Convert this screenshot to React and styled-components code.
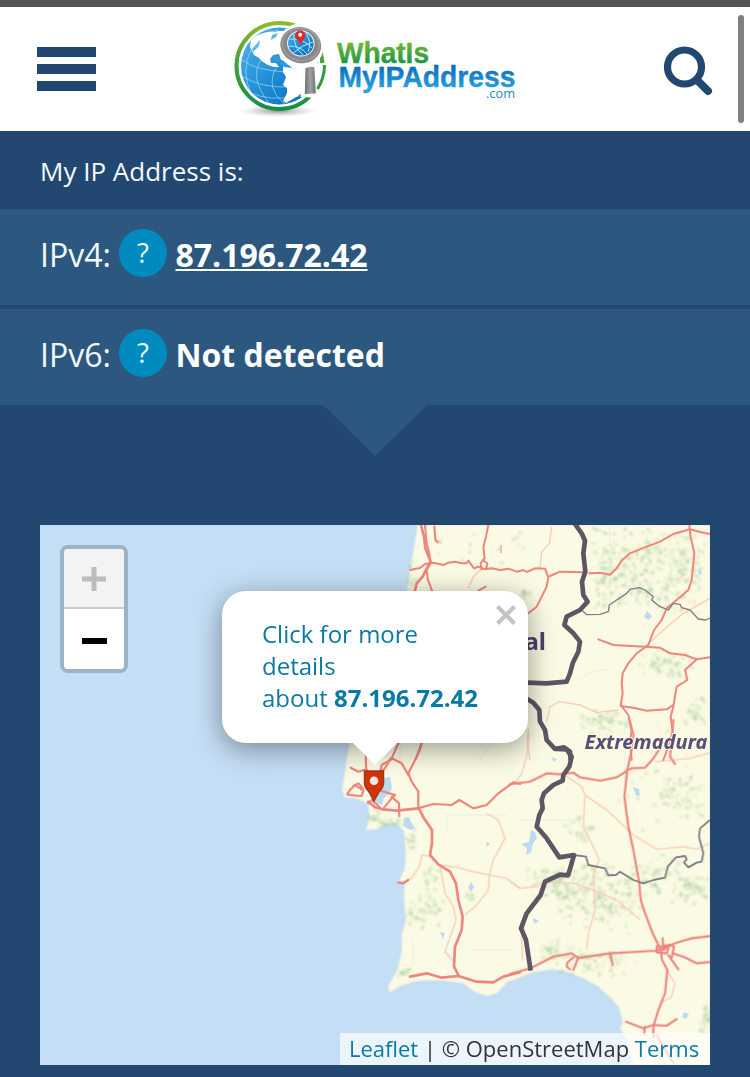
import React from "react";
import styled, { createGlobalStyle } from "styled-components";

const Global = createGlobalStyle`
  * { box-sizing: border-box; }
  body { margin: 0; background: #224871; font-family: "Open Sans", "Noto Sans", sans-serif; overflow: hidden; }
`;

const Page = styled.div`
  width: 750px;
  height: 1077px;
  overflow: hidden;
  position: relative;
  background: #224871;
  color: #f2faff;
`;
const TopBar = styled.div`
  height: 7px;
  background: #555454;
`;
const Header = styled.header`
  height: 124px;
  background: #fff;
  display: flex;
  justify-content: space-between;
  align-items: flex-start;
  padding: 0 36px 0 36.5px;
`;
const MenuButton = styled.div`
  display: flex;
  flex-direction: column;
  gap: 7px;
  width: 59px;
  margin-top: 40px;
`;
const MenuBar = styled.span`
  height: 10px;
  background: #224871;
`;
const Logo = styled.svg`
  display: block;
  width: 300px;
  height: 124px;
  margin-right: 11px;
`;
const SearchIcon = styled.svg`
  display: block;
  width: 50px;
  height: 50px;
  margin-top: 39px;
`;
const ScrollThumb = styled.div`
  position: absolute;
  top: 15px;
  right: 6px;
  width: 6px;
  height: 108px;
  border-radius: 3px;
  background: #808080;
`;
const Title = styled.div`
  height: 78px;
  padding: 1px 40px 0;
  display: flex;
  align-items: center;
  font-size: 26px;
`;
const Rows = styled.div`
  display: flex;
  flex-direction: column;
  gap: 4px;
`;
const Row = styled.div`
  height: 96px;
  padding: 0 40px;
  display: flex;
  align-items: center;
  background: #2c587f;
  font-size: 32px;
`;
const Label = styled.span`
  width: 79px;
  padding-bottom: 5px;
  white-space: nowrap;
`;
const Help = styled.span`
  width: 48px;
  height: 48px;
  border-radius: 50%;
  background: #008bc0;
  margin: 0 8.5px 8px 0;
  padding-bottom: 1px;
  display: flex;
  align-items: center;
  justify-content: center;
  font-size: 27.5px;
`;
const Value = styled.span`
  font-weight: 700;
  color: #fff;
  padding-bottom: 5px;
  text-decoration: ${(p) => (p.$link ? "underline" : "none")};
  text-decoration-thickness: 2px;
  text-underline-offset: 2px;
  text-decoration-skip-ink: none;
`;
const Arrow = styled.div`
  width: 104px;
  height: 51px;
  margin: 0 auto 69px;
  background: #2c587f;
  clip-path: polygon(0 0, 100% 0, 50% 100%);
`;
const MapBox = styled.div`
  position: relative;
  width: 670px;
  height: 540px;
  margin: 0 40px;
  overflow: hidden;
  background: #c4def5;
`;
const MapSvg = styled.svg`
  display: block;
  width: 670px;
  height: 540px;
`;
const ZoomControl = styled.div`
  position: absolute;
  left: 20px;
  top: 20px;
  width: 68px;
  height: 128px;
  border: 4px solid #9cb2c7;
  border-radius: 8px;
  background: #fff;
  overflow: hidden;
  display: flex;
  flex-direction: column;
`;
const ZoomButton = styled.div`
  height: 60px;
  display: flex;
  align-items: center;
  justify-content: center;
  padding-top: ${(p) => (p.$disabled ? "2px" : "4px")};
  background: ${(p) => (p.$disabled ? "#f3f3f3" : "#fff")};
  color: ${(p) => (p.$disabled ? "#bcbcbc" : "#000")};
  border-bottom: ${(p) => (p.$disabled ? "2px solid #ccc" : "none")};
`;
const Popup = styled.div`
  position: absolute;
  left: 182px;
  top: 66px;
  width: 306px;
  height: 152px;
  border-radius: 24px;
  background: #fff;
  box-shadow: 0 6px 28px rgba(0, 0, 0, 0.4);
  padding: 27px 40px;
  color: #0a79a4;
  font-size: 24px;
  line-height: 32px;
`;
const Close = styled.svg`
  position: absolute;
  right: 12px;
  top: 14px;
  width: 20px;
  height: 20px;
`;
const Tip = styled.div`
  position: absolute;
  left: 312px;
  top: 217px;
  width: 46px;
  height: 23px;
  background: #fff;
  clip-path: polygon(0 0, 100% 0, 50% 100%);
`;
const Pin = styled.svg`
  position: absolute;
  left: 323px;
  top: 245px;
  width: 22px;
  height: 32px;
`;
const Attribution = styled.div`
  position: absolute;
  right: 0;
  bottom: 0;
  width: 370px;
  height: 32px;
  line-height: 31px;
  padding-left: 9px;
  background: rgba(255, 255, 255, 0.7);
  color: #333;
  font-size: 22px;
  white-space: nowrap;
`;
const Link = styled.span`
  color: #0a79a4;
`;

const toPath = (pts) => "M" + pts.trim().split(/\s+/).join(" L").replace(/LM/g, "M");
const Line = ({ p, ...rest }) => <path d={toPath(p)} {...rest} />;

/* [centre x, centre y, spread x, spread y, count] of each woodland */
const woods = [
  [605, 575, 18, 45, 70], [650, 555, 50, 28, 130], [645, 590, 40, 25, 110], [690, 575, 18, 45, 60],
  [667, 665, 30, 14, 60], [605, 722, 26, 12, 60], [695, 712, 10, 16, 30], [680, 795, 25, 22, 50],
  [580, 832, 14, 14, 28], [560, 885, 32, 20, 110], [600, 895, 45, 35, 170], [655, 875, 30, 22, 60],
  [690, 888, 20, 18, 55], [595, 962, 40, 16, 80], [550, 950, 12, 10, 30], [430, 878, 10, 14, 18],
  [431, 905, 14, 22, 36], [413, 915, 7, 14, 14], [403, 972, 7, 4, 14], [411, 840, 5, 12, 14],
  [388, 823, 14, 4, 22], [374, 816, 6, 6, 12], [412, 580, 5, 25, 24], [524, 593, 10, 6, 14],
  [470, 895, 5, 5, 6], [705, 1020, 7, 18, 28], [655, 780, 45, 60, 28], [480, 550, 60, 22, 14],
];
const specks = (() => {
  let s = 11;
  const rnd = () => (s = (s * 16807) % 2147483647) / 2147483647;
  const out = [];
  woods.forEach(([x, y, w, h, n]) => {
    for (let i = 0; i < n; i++) {
      out.push([
        x + (rnd() + rnd() - 1) * w * 1.1,
        y + (rnd() + rnd() - 1) * h * 1.1,
        0.8 + rnd() * 1.7,
        0.8 + rnd() * 1.4,
        0.18 + rnd() * 0.38,
      ]);
    }
  });
  return out;
})();

const NE = "translate(400 520) scale(.33333)";
const SW = "translate(330 720) scale(.33333)";
const SE = "translate(510 720) scale(.33333)";

function Terrain() {
  return (
    <MapSvg viewBox="40 525 670 540">
      <defs>
        <filter id="soft"><feGaussianBlur stdDeviation="0.5" /></filter>
        <filter id="softer"><feGaussianBlur stdDeviation="0.9" /></filter>
      </defs>
      <path
        d="M418 525 L414 548 L410 570 L407 592 L400 630 L385 680 L360 715 L350 743 L347 757 L345 773 L342 790 L345 797 L356 798 L368 803 L370 817 L366 830 L376 829 L385 824 L397 823 L404 831 L406 853 L405 868 L400 880 L405 884 L404 897 L406 920 L402 935 L402 950 L398 969 L388 987 L390 992 L402 985 L415 981 L440 980 L463 983 L475 992 L487 996 L497 993 L507 982 L520 977 L533 972 L553 969 L568 972 L583 978 L598 986 L610 997 L619 1007 L622 1017 L623 1023 L620 1028 L628 1040 L633 1065 L710 1065 L710 525Z"
        fill="#fbfae4" stroke="#e4efe4" strokeWidth="1.5"
      />
      <g fill="#a3cc96" filter="url(#softer)">
        {specks.map(([x, y, rx, ry, o], i) => (
          <ellipse key={i} cx={x} cy={y} rx={rx} ry={ry} opacity={o} />
        ))}
      </g>
      <g fill="#bcdaf2" filter="url(#soft)">
        <path d="M380 785 L384 778 L390 777 L392 788 L389 794 L384 798 L382 805 L374 803 L379 792Z" />
        <path d="M404 818 l5 -1 2 5 4 6 -5 2 -7 -4Z" />
        <path d="M531 830 l4 2 2 6 -4 5 -2 9 -5 3 1 -7 -6 -4 8 -2Z" />
        <path d="M633 787 l6 2 1 7 -4 -1Z M647 611 l5 5 -3 4 -5 -3Z M698 567 l4 6 -3 2Z M551 757 l6 2 -3 3Z M533 918 l6 3 -5 3Z M684 1012 l5 2 -3 5 -4 -2Z M471 882 l3 5 -3 5 -3 -4Z M486 842 l4 2 -3 3Z M440 932 l5 1 -2 6Z" />
      </g>
      <g stroke="#c9e0f0" fill="none" strokeWidth="0.8" opacity=".5">
        <path d="M580 680 l10 -8 l20 -3 M625 785 v-60 M447 830 v-16 M447 815 h60 M413 940 v25 M610 520 v100 M470 950 h45 M518 820 h60 M400 743 v20 M455 735 l18 -12 M480 760 l15 -22" />
      </g>

      <g fill="none" stroke="#f7cdb3" strokeWidth="1.2" filter="url(#soft)">
        <g transform={NE} strokeWidth="4">
          <Line p="455,20 448,70 425,95 420,145" />
          <Line p="245,148 220,170 205,205" />
          <Line p="103,15 108,55 125,72" />
          <Line p="440,605 450,560 480,545 540,555 590,578 655,570" />
          <Line p="735,380 790,330 850,280 930,235" />
          <Line p="385,625 382,665 390,720" />
        </g>
        <g transform={SW} strokeWidth="4">
          <Line p="470,280 505,300 525,355 490,420 478,465 475,510 440,555 405,585" />
          <Line p="330,435 380,442 430,455 480,465 530,475 570,505" />
          <Line p="210,488 245,475 270,435 275,405 300,408" />
          <Line p="330,435 345,520 370,560 378,600 345,695 372,725" />
        </g>
        <g transform={SE} strokeWidth="4">
          <Line p="58,40 50,110 35,160 15,190" />
          <Line p="165,165 215,200 225,225 220,320 245,370 268,420 250,460 255,570 235,640 230,690" />
          <Line p="225,225 290,270 370,345 440,388 520,380 560,388 600,370" />
          <Line p="0,485 30,505 80,500 105,485 190,490 250,510 320,540 390,600" />
          <Line p="435,125 490,120 540,115 600,98" />
          <Line p="470,750 495,790 485,830 450,850" />
          <Line p="50,580 35,650 38,720" />
        </g>
      </g>

      <g fill="none" stroke="#ef857c" strokeLinejoin="round" strokeLinecap="round" filter="url(#soft)">
        <g transform={NE} strokeWidth="6">
          <Line p="63,15 72,50 76,85 84,105 92,125 80,145 68,170 50,190 44,215" strokeWidth="8" />
          <Line p="75,15 80,70 88,100 92,130 80,150 84,180 97,215" />
          <Line p="103,20 106,60 114,68" />
          <Line p="30,150 60,144 75,132 100,128 130,135 145,128 165,125 185,130 200,130 205,122 222,145 235,140 255,148 275,145 300,150 325,146 350,155 370,150 380,156 405,145 435,146 445,172 440,200 430,220 410,260 385,280" />
          <Line p="265,15 258,50 250,80 254,115 242,130 245,148" />
          <Line p="248,120 262,130 258,148" />
          <Line p="450,168 480,155 550,157" />
          <Line p="568,160 600,158 630,164 650,145 665,122 690,100 740,80 780,65 820,42 870,28 900,36 930,42" />
          <Line p="868,15 872,50 883,100 875,180 865,210 830,240 800,265 785,300 762,330 745,375 710,400 685,430 668,460 665,490 668,520 662,555 685,585 695,630 690,665 695,720" />
          <Line p="595,358 640,375 735,380 780,383 810,400 855,405 890,418 930,412" />
          <Line p="890,418 855,450 862,480 830,500 820,560 812,590 818,635 805,680 790,720" />
          <Line p="662,558 700,563 740,572 800,568 820,555" />
          <Line p="235,212 257,200" />
          <Line p="303,76 303,98" strokeWidth="3" />
          <Line p="65,668 60,690 45,720" />
        </g>
        <g transform={SW} strokeWidth="6.5">
          <Line p="275,70 258,115 235,160 245,185 265,215 265,262" />
          <Line p="205,70 185,115 215,130 235,165" />
          <Line p="182,115 165,145 150,158" />
          <Line p="107,80 108,140 112,155" />
          <Line p="62,143 85,155 108,148" />
          <Line p="185,118 155,135 150,160" />
          <Line p="52,222 60,210 75,195 90,205 100,212 95,228 70,226 52,224" />
          <Line p="70,198 85,190 98,205" />
          <Line p="115,245 135,262 158,268 200,272 265,265" strokeWidth="8" />
          <Line p="158,268 185,235 195,225 155,213" />
          <Line p="185,230 207,250 208,288" />
          <Line p="115,250 125,240 150,262" />
          <Line p="265,265 310,252 365,255 388,240 430,265 470,255 505,220 550,187 570,192" />
          <Line p="265,262 282,295 306,330 306,370 300,405 325,433 360,455 378,490 385,540 398,590 395,630 375,680 372,740 385,765" strokeWidth="8" />
          <Line p="240,770 290,760 335,773 385,768 440,785 490,787 520,770 570,757" strokeWidth="8" />
          <Line p="205,488 220,490 235,480" />
        </g>
        <g transform={SE} strokeWidth="6.5">
          <Line p="0,192 60,185 110,160 150,163 190,158 210,172 270,182 320,172 352,152" />
          <Line p="358,0 370,45 365,90 352,150 343,230 355,320 370,390 388,490 392,540 405,580 428,640 452,688 456,720 472,750 465,820 445,870 430,920 430,950" />
          <Line p="352,150 365,145 405,143 430,115 450,85" />
          <Line p="490,0 486,50 480,110 495,132" />
          <Line p="0,762 60,745 130,710 185,700 205,714 300,700 440,692 500,668 545,655 600,648" />
          <Line p="205,712 190,750" />
          <Line p="180,748 170,740 172,728 190,712" />
          <Line p="300,700 308,735" />
          <Line p="458,655 460,690 480,675 492,680 485,712" />
          <Line p="440,678 440,697 470,700 478,675 445,680" />
          <Line p="490,700 525,712 560,730 600,726" />
          <Line p="475,705 505,748" />
          <Line p="348,905 400,925 430,915 470,917 500,897" />
          <Line p="404,920 403,945" />
          <Line p="440,945 490,1030" />
        </g>
      </g>

      <g fill="none" stroke="#807c86" strokeWidth="4" strokeLinejoin="round">
        <g transform={NE}>
          <Line p="545,270 560,284 600,283 625,275 628,255 650,240 680,220 690,208 718,203 735,210 760,230 755,240 780,260 805,270 820,250 840,253 845,263 870,270 895,297 918,300 930,294" />
        </g>
        <g transform={SE} strokeWidth="5.5">
          <Line p="190,405 228,410 235,435 285,445 295,466 318,465 330,455 370,480 400,490 430,480 465,473 473,440 498,412 525,408 530,418 522,428 535,442 560,428 575,425 580,400 567,350 570,325 600,300" />
        </g>
      </g>
      <g fill="none" stroke="#5f5464" strokeWidth="14" strokeLinejoin="round" filter="url(#soft)">
        <g transform={NE}>
          <Line p="522,8 545,40 555,62 550,100 556,155 546,185 550,225 563,245 540,270 500,290 493,315 520,340 540,365 535,395 518,430 510,460 500,485 440,490 380,488" />
          <Line p="378,535 400,548 418,570 420,605 435,630 440,660 465,687 492,682 510,695 512,720" />
        </g>
        <g transform={SE}>
          <Line p="138,87 170,88 185,110 178,140 160,165 158,182 130,195 102,220 95,240 98,265 88,285 80,320 110,355 148,412 192,405 182,440 174,466 150,464 105,485 92,525 50,580 33,625 48,660 62,752" />
        </g>
      </g>
      <g fontFamily="Noto Sans, sans-serif" fontWeight="700" fill="#4e4168" stroke="#fbfae4" strokeWidth="2" paintOrder="stroke">
        <text x="546" y="649.500" fontSize="24" textAnchor="end">Portugal</text>
        <text x="584.500" y="749" fontSize="19" fontStyle="italic" fill="#5c4c78" textLength="123" lengthAdjust="spacingAndGlyphs">Extremadura</text>
      </g>
    </MapSvg>
  );
}

function BrandLogo() {
  return (
    <Logo viewBox="225 7 300 124">
      <defs>
        <linearGradient id="ring" x1="0" y1="0" x2="0" y2="1">
          <stop offset="0" stopColor="#8abd2c" />
          <stop offset=".5" stopColor="#3f9f3a" />
          <stop offset="1" stopColor="#159044" />
        </linearGradient>
        <linearGradient id="sea" x1="0" y1="0" x2="1" y2="1">
          <stop offset="0" stopColor="#52b6ea" />
          <stop offset=".5" stopColor="#1f8fd6" />
          <stop offset="1" stopColor="#0865b6" />
        </linearGradient>
        <linearGradient id="green" x1="0" y1="0" x2="0" y2="1">
          <stop offset=".1" stopColor="#80bd34" />
          <stop offset=".9" stopColor="#159443" />
        </linearGradient>
        <linearGradient id="blue" x1="0" y1="0" x2="0" y2="1">
          <stop offset=".1" stopColor="#0866b8" />
          <stop offset=".9" stopColor="#29a5e0" />
        </linearGradient>
        <linearGradient id="metal" x1="0" y1="0" x2="1" y2="0">
          <stop offset="0" stopColor="#6c6d6e" />
          <stop offset=".5" stopColor="#a0a1a2" />
          <stop offset="1" stopColor="#707172" />
        </linearGradient>
        <radialGradient id="shade">
          <stop offset="0" stopColor="#777" stopOpacity=".8" />
          <stop offset="1" stopColor="#bbb" stopOpacity="0" />
        </radialGradient>
        <clipPath id="globe"><circle cx="280.500" cy="66" r="38.500" /></clipPath>
      </defs>
      <ellipse cx="279" cy="111" rx="39" ry="6" fill="url(#shade)" />
      <circle cx="280.500" cy="66" r="43" fill="#fff" stroke="url(#ring)" strokeWidth="4" />
      <circle cx="280.500" cy="66" r="38.500" fill="url(#sea)" />
      <g clipPath="url(#globe)">
        <g fill="none" stroke="#a6d8f4" strokeWidth=".7">
          <path d="M243 60 Q256 70 286 72 M242 76 Q262 88 290 87 M250 92 Q270 102 300 96 M253 48 Q240 70 254 98 M262 60 Q250 78 270 103 M277 68 Q266 88 286 104" />
        </g>
        <path fill="#fff" d="M251 47 L252 39 Q262 32 275 31 L284 31 L300 26 L325 40 L318 68 L300 69 L292 66 L288 61 L282 60 L280 54 L274 55 L271 59 L272 63 L277 63 L280 67 L275 67 L269 65 L264 62 L260 58 L255 55Z" />
        <path fill="#fff" d="M284 66 L290 64 L322 66 L320 96 L304 92 L299 96 L292 100 L287 103 L284 101 L288 93 L288 88 L284 85 L287 77 L284 72Z" />
        <path fill="#5db8e8" d="M273 35 l6 -2 -2 4 -5 3Z M269 31 l12 -2 -4 3Z M253 49 l8 -9 -1 6 -6 6Z" />
        <path fill="#2f9bdd" d="M274 57 l5 -2 3 6 7 2 4 5 -8 -1 -5 -5 -5 0Z" />
      </g>
      <path d="M302 66 L318 64 L329 62 L321 98 L301.500 97Z" fill="#fff" />
      <path d="M325.500 65 Q325.500 78 318.500 89" fill="none" stroke="#36993e" strokeWidth="3" />
      <path d="M306.500 66 Q311 67 315.300 67.200 L316.800 93.500 L305.800 94Z" fill="url(#metal)" />
      <circle cx="301.800" cy="46" r="22.800" fill="#fff" />
      <g transform="rotate(12 301.800 45)">
        <ellipse cx="301.800" cy="45.200" rx="20.500" ry="18" fill="#8a898a" />
        <ellipse cx="301.800" cy="44.500" rx="18.500" ry="16" fill="none" stroke="#a6a5a5" strokeWidth="1" />
        <ellipse cx="301.500" cy="43.500" rx="13.300" ry="12.500" fill="url(#sea)" stroke="#eef7fc" strokeWidth="1" />
      </g>
      <path d="M291 39 Q304 38 313 48 M290 46 Q302 46 308 54 M294 53 Q303 45 314 42 M295 34 Q294 46 304 55 M307 33 Q313 42 309 52" fill="none" stroke="#b6e2f7" strokeWidth="1" />
      <path d="M301.500 45 C299.500 40 296 39 296 35.500 A5.200 5 0 0 1 306.400 35.500 C306.400 39 303.500 40 301.500 45Z" fill="#dd2b29" />
      <circle cx="301.200" cy="34.800" r="2" fill="#fff" />
      <g fontFamily="Liberation Sans, sans-serif" fontWeight="700" strokeLinejoin="round" strokeWidth=".4">
        <text x="338" y="62.500" fontSize="29.500" textLength="92" lengthAdjust="spacingAndGlyphs" fill="url(#green)" stroke="url(#green)">WhatIs</text>
        <text x="339.500" y="87" fontSize="29.500" textLength="177" lengthAdjust="spacingAndGlyphs" fill="url(#blue)" stroke="url(#blue)">MyIPAddress</text>
      </g>
      <text x="487" y="98" fontFamily="Open Sans, sans-serif" fontSize="13" textLength="29" lengthAdjust="spacingAndGlyphs" fill="#2689c6">.com</text>
    </Logo>
  );
}

function AddressRow({ label, value, link }) {
  return (
    <Row>
      <Label>{label}</Label>
      <Help>?</Help>
      <Value $link={link}>{value}</Value>
    </Row>
  );
}

export default function App() {
  return (
    <Page>
      <Global />
      <TopBar />
      <Header>
        <MenuButton><MenuBar /><MenuBar /><MenuBar /></MenuButton>
        <BrandLogo />
        <SearchIcon viewBox="0 0 50 50">
          <circle cx="20.500" cy="21" r="17" fill="none" stroke="#224871" strokeWidth="7.200" />
          <path d="M33 34 L44 45" stroke="#224871" strokeWidth="8" strokeLinecap="round" />
        </SearchIcon>
      </Header>
      <ScrollThumb />
      <Title>My IP Address is:</Title>
      <Rows>
        <AddressRow label="IPv4:" value="87.196.72.42" link />
        <AddressRow label="IPv6:" value="Not detected" />
      </Rows>
      <Arrow />
      <MapBox>
        <Terrain />
        <ZoomControl>
          <ZoomButton $disabled>
            <svg width="24" height="24"><path d="M12 0V24M0 12H24" stroke="currentColor" strokeWidth="5" /></svg>
          </ZoomButton>
          <ZoomButton>
            <svg width="26" height="6"><path d="M1 3H26" stroke="currentColor" strokeWidth="6" /></svg>
          </ZoomButton>
        </ZoomControl>
        <Pin viewBox="0 0 22 32">
          <path d="M1.500 1H20.500V13Q20.500 17 16 22L11 31L6 22Q1.500 17 1.500 13Z" fill="#d4330a" stroke="#9e3a18" strokeWidth="1.500" />
          <circle cx="11" cy="10.800" r="4.300" fill="#f8e9e0" />
        </Pin>
        <Popup>
          Click for more<br />details<br />about <b>87.196.72.42</b>
          <Close viewBox="0 0 20 20">
            <path d="M1.500 1.500L18.500 18.500M18.500 1.500L1.500 18.500" stroke="#c3c3c3" strokeWidth="4" />
          </Close>
        </Popup>
        <Tip />
        <Attribution>
          <Link>Leaflet</Link> | © OpenStreetMap <Link>Terms</Link>
        </Attribution>
      </MapBox>
    </Page>
  );
}
